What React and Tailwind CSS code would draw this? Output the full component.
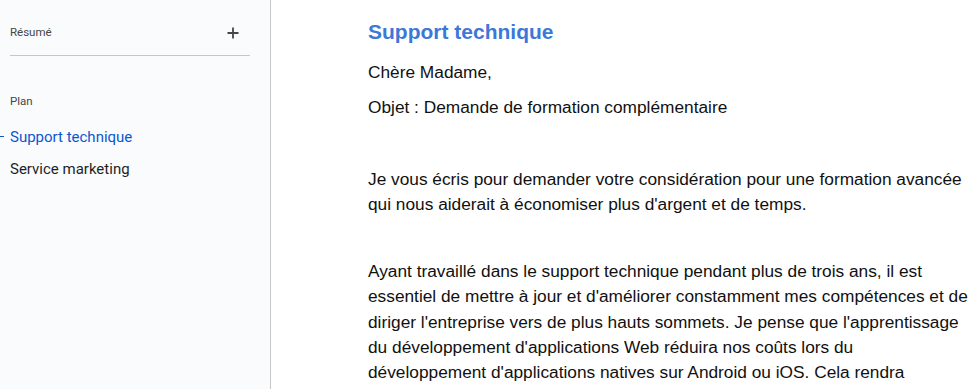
const outline = [
  { label: "Support technique", active: true },
  { label: "Service marketing", active: false },
];

const paragraphs = [
  "Je vous écris pour demander votre considération pour une formation avancée qui nous aiderait à économiser plus d'argent et de temps.",
  "Ayant travaillé dans le support technique pendant plus de trois ans, il est essentiel de mettre à jour et d'améliorer constamment mes compétences et de diriger l'entreprise vers de plus hauts sommets. Je pense que l'apprentissage du développement d'applications Web réduira nos coûts lors du développement d'applications natives sur Android ou iOS. Cela rendra également le flux de travail beaucoup plus fluide.",
];

const App = () => {
  return (
    <div className="flex h-[389px] w-[980px] overflow-hidden bg-white">
      {/* outline panel */}
      <aside className="w-[271px] shrink-0 border-r border-[#c7c7c7] bg-[#f9fbfd] font-['Roboto',sans-serif]">
        <div className="ml-[10px] mr-[20px] flex h-[56px] items-center justify-between border-b border-[#c4c7c5] pt-[11px]">
          <span className="text-[11.5px] text-[#444746]">Résumé</span>
          <svg className="mr-[11px] h-[12px] w-[12px] text-[#444746]" viewBox="0 0 12 12" fill="none" stroke="currentColor" strokeWidth="1.8">
            <path d="M6 0.5v11M0.5 6h11" />
          </svg>
        </div>
        <div className="pl-[10px] pt-[37px] text-[11.5px] text-[#444746]">Plan</div>
        <ul className="mt-[17px] flex flex-col gap-[13px]">
          {outline.map((item, i) => (
            <li key={i} className="relative flex h-[19px] items-center pl-[10px]">
              {item.active && <span className="absolute left-0 top-[9px] h-[1px] w-[4px] bg-[#0b57d0]"></span>}
              <span className={`text-[15px] ${item.active ? "text-[#0b57d0]" : "text-[#1f1f1f]"}`}>{item.label}</span>
            </li>
          ))}
        </ul>
      </aside>

      {/* document */}
      <main className="flex-1 pl-[97px] pr-[8px] font-['Liberation_Sans',Arial,sans-serif] text-[17.3px] text-[#111]">
        <h1 className="pt-[18px] text-[21px] font-bold leading-[28px] text-[#3c78d8]">Support technique</h1>
        <p className="mt-[14px] leading-[25px]">Chère Madame,</p>
        <p className="mt-[10px] leading-[25px]">Objet : Demande de formation complémentaire</p>
        <p className="mt-[47px] leading-[25px]">{paragraphs[0]}</p>
        <p className="mt-[42px] leading-[25.3px]">{paragraphs[1]}</p>
      </main>
    </div>
  );
};

export default App;
